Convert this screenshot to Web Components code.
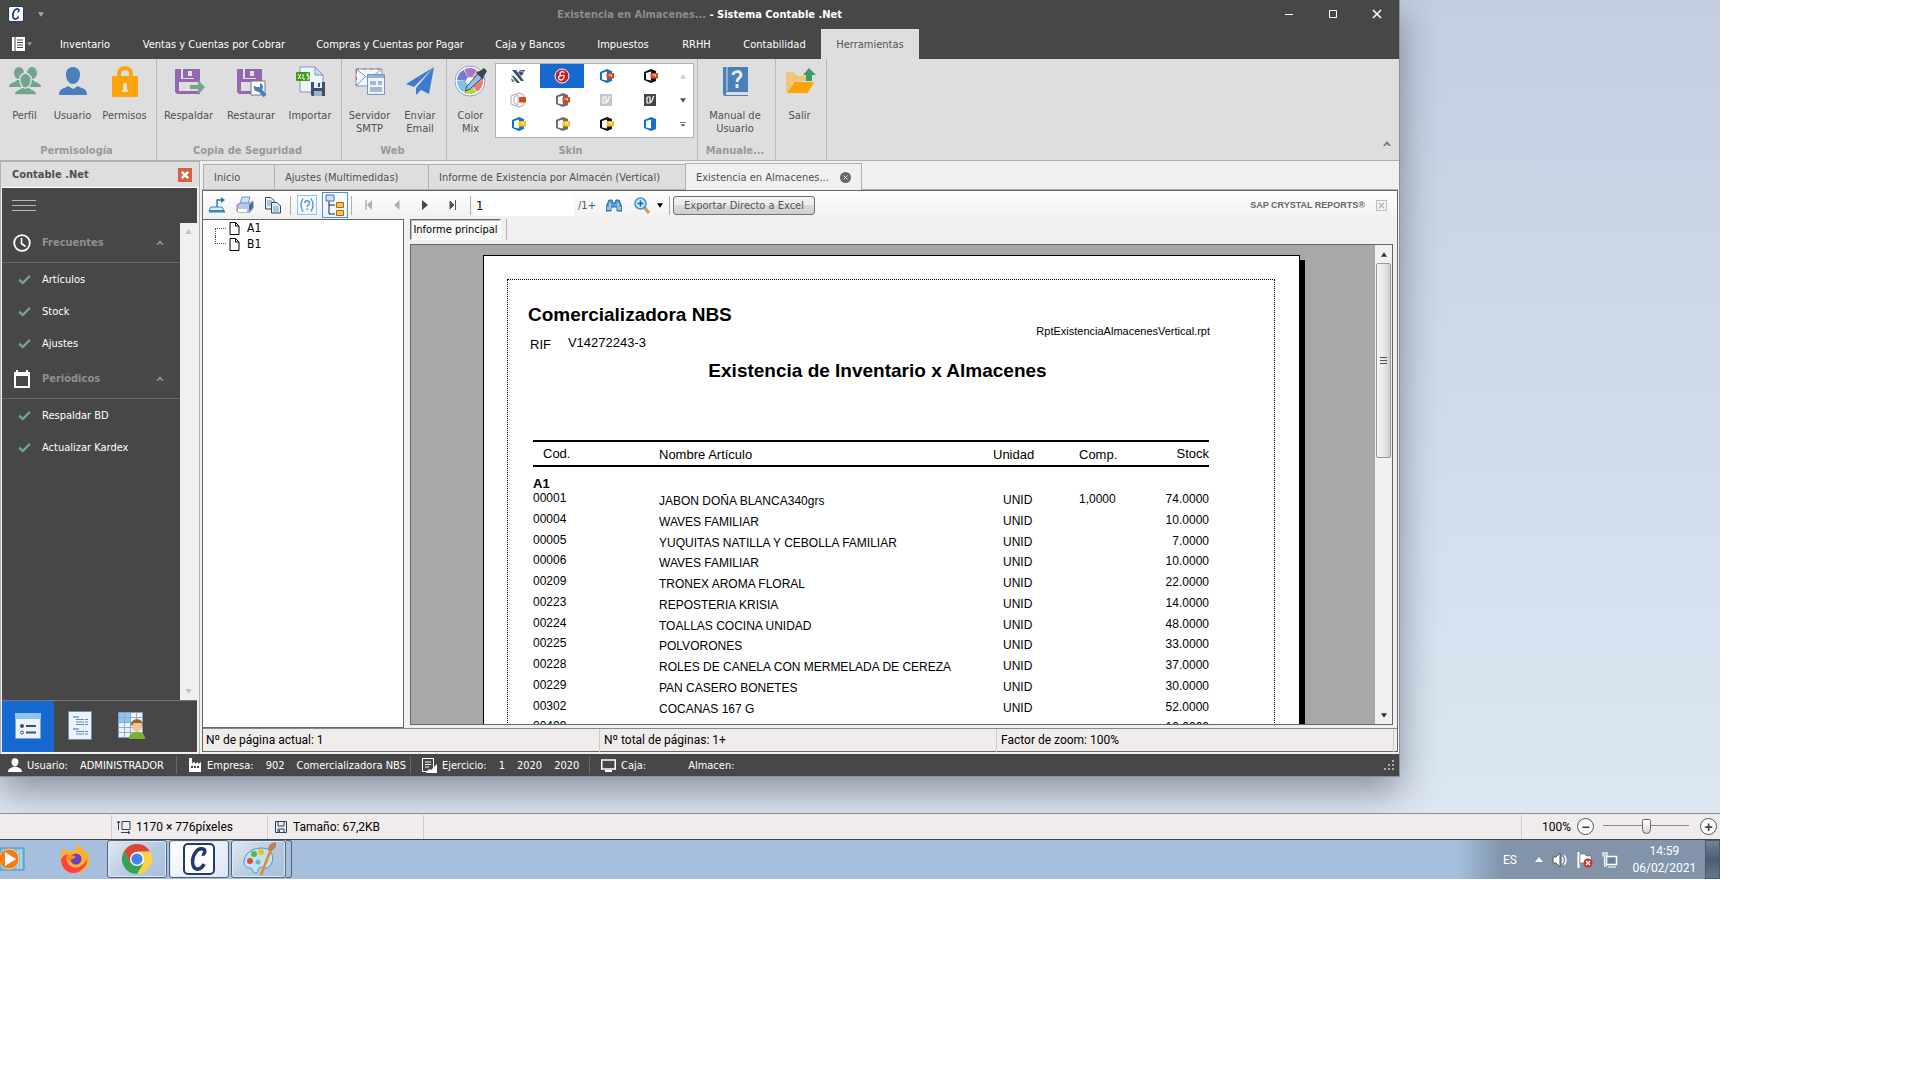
<!DOCTYPE html>
<html lang="es">
<head>
<meta charset="utf-8">
<title>Sistema Contable .Net</title>
<style>
body{margin:0;background:#fff;font:11px/13px "DejaVu Sans Condensed",Roboto,sans-serif;color:#444}
</style>
</head>
<body>
<desk-top></desk-top>
<script>
const reset = `*{box-sizing:border-box}button{font:inherit;color:inherit;background:none;border:0;padding:0;margin:0;cursor:pointer}:host{display:block}`;
function define(name, css, html) {
  customElements.define(name, class extends HTMLElement {
    constructor() {
      super();
      this.attachShadow({mode: 'open'});
    }
    connectedCallback() {
      if (this.shadowRoot.childNodes.length) return;
      const t = document.createElement('template');
      t.innerHTML = `<style>${reset}${css}</style>` + (typeof html === 'function' ? html(this) : html);
      this.shadowRoot.append(t.content.cloneNode(true));
    }
  });
}

const office = (c, b) => `<path d="M2 4 9 1l5 2v10l-5 2-7-3z" fill="${c}"/><path d="M4 5l5-1.500v9L4 11.500z" fill="#fff"/>` + (b ? `<path d="M8.500 5H16v5.500H8.500z" fill="${b}"/><path d="M10.500 6.500h3.500v2h-1v-1h-2.500z" fill="#fff" opacity=".8"/>` : '');
const floppy = `<path d="M2 4h25v25H4l-2-2z" fill="#9468b1"/><path d="M8 4h13v10H8z" fill="#dedede"/><path d="M10 4h11v9H10z" fill="#9468b1"/><path d="M15 6h4v5h-4z" fill="#dedede"/><path d="M6 17h21v9H6z" fill="#dedede"/>`;
const icons = {
  users: ['0 0 32 28', `<g fill="#73a48f"><ellipse cx="10" cy="6" rx="5" ry="6"/><ellipse cx="23" cy="6" rx="5" ry="6"/><path d="M0 20c0-5 6-4 8-7h5v7zM32 20c0-5-6-4-8-7h-5v7z"/></g><g fill="#73a48f" stroke="#dedede" stroke-width="1.500"><path d="M5 28c0-6 6-5 8-8h7c2 3 8 2 8 8z"/><path d="M11 10q5-8 11 0c1 6-2 11-5.500 11S10 16 11 10z"/></g>`],
  user: ['0 0 28 28', `<path d="M7 7c0-4 3-7 7-7s7 3 7 7c0 6-3 10-7 10S7 13 7 7zM0 28c0-7 5-6 9-9l5 3 5-3c4 3 9 2 9 9z" fill="#4a80b9"/>`],
  lock: ['0 0 26 32', `<path d="M7 13V9a6 6 0 0 1 12 0v4" fill="none" stroke="#fca50b" stroke-width="4"/><rect y="11" width="26" height="21" rx="1" fill="#fca50b"/><circle cx="13" cy="20" r="2" fill="#dedede"/><path d="M11 20h4v5h1v2h-6v-2h1z" fill="#dedede"/>`],
  backup: ['0 0 32 32', floppy + `<path d="M17 20h8v-5l7 7-7 8v-6h-8z" fill="#73a48f"/>`],
  restore: ['0 0 32 32', floppy + `<path d="M16 16h14v14H16z" fill="#fff" stroke="#777"/><path d="M19 21a4.500 4.500 0 1 0 6-3v4h-3z" fill="#4a80b9"/><path d="m24 24 6 7" stroke="#4a80b9" stroke-width="4"/>`],
  xls: ['0 0 32 32', `<path d="M6 2h15l8 8v17H6z" fill="#eef4fc" stroke="#7d96bd"/><path d="M21 2v8h8z" fill="#cfdcf0" stroke="#7d96bd"/><rect x="2" y="7" width="14" height="9" rx="1" fill="#3f9a1b"/><path d="m4 9 3 5m0-5-3 5m5-5v5h2m4-5h-2v2h2v3h-2" stroke="#fff" stroke-width="1" fill="none"/><path d="M17 17h14v14H18l-1-1z" fill="#3c4f70"/><path d="M20 17h8v6h-8z" fill="#e4edf8"/><path d="M24 18h2v4h-2z" fill="#3c4f70"/><path d="M20 26h8v5h-8z" fill="#9fb3d1"/>`],
  smtp: ['0 0 32 32', `<path d="M2 4h26v17H2z" fill="#f3f7fd" stroke="#8397bd"/><path d="M2 4h26" stroke="#d55" stroke-dasharray="3 4"/><path d="M2.500 5v16" stroke="#d55" stroke-dasharray="3 4"/><path d="m2 4 13 10L28 4M2 21l9-9" fill="none" stroke="#8397bd"/><path d="M13.500 9.500h17v20h-17z" fill="#edf3fb" stroke="#7e92bb"/><path d="M14 10h16v3H14z" fill="#9aaed5"/><path d="M16 16h6v4h-6zM24 16h4v4h-4zM16 22h12v5H16z" fill="#a4b7da"/>`],
  plane: ['0 0 28 28', `<path d="M28 0 0 17l8 3zM28 0 10 21v7l5-5 8 4z" fill="#3f7bcc"/>`],
  mix: ['0 0 32 32', `<circle cx="15" cy="16" r="15" fill="#fff" stroke="#8b9dc4"/><g fill="none" stroke-width="9" stroke-dasharray="8.500 47"><circle cx="15" cy="16" r="8.500" stroke="#ee7a7a"/><circle cx="15" cy="16" r="8.500" stroke="#b6d04a" stroke-dashoffset="-9"/><circle cx="15" cy="16" r="8.500" stroke="#7ec0e8" stroke-dashoffset="-18"/><circle cx="15" cy="16" r="8.500" stroke="#6f7fd4" stroke-dashoffset="-27"/><circle cx="15" cy="16" r="8.500" stroke="#a678cc" stroke-dashoffset="-36"/><circle cx="15" cy="16" r="8.500" stroke="#f29a6c" stroke-dashoffset="-45"/></g><path d="M10 26 12 21 23 9l4 4-12 11z" fill="#8ec4ea" stroke="#2f4a6c"/><path d="m21 7 4-1 4-3 3 3-3 5-1 4z" fill="#35465c"/>`],
  book: ['0 0 26 32', `<path d="M1 2h25v25H4v3h22v1H3q-2 0-2-3z" fill="#4a80b9"/><path d="M5 2v24" stroke="#dedede"/><path d="M11 10c0-4 8-5 8 0 0 3-4 3-4 7" fill="none" stroke="#e8e8e8" stroke-width="3"/><path d="M13.500 19h3v4h-3z" fill="#e8e8e8"/>`],
  exit: ['0 0 32 32', `<path d="M2 7h8l3 4h9v5L9 17 4 27H2z" fill="#eec579"/><path d="M10 17h20l-6 11H3z" fill="#fca50b"/><path d="M25 3l7 7h-4v6h-6v-6h-3z" fill="#3d9b69"/>`],
  s0: ['0 0 16 16', `<path d="M1 7 5 9l5 6H7zM2 2h4l8 11h-3zM9 2h6l-1 2zM8 4l3 4 3-3-4-2z" fill="#384f6e"/><path d="m1 10 4 3-3 1z" fill="#478267"/>`],
  s1: ['0 0 16 16', `<circle cx="8" cy="8" r="7" fill="#cf1b1f" stroke="#fff"/><path d="M10.500 4.500C7 2 4.500 6 7 7.500c-3 0-3.500 4.500 0 4.500 3 0 3.500-4 3-4.500H8.500" fill="none" stroke="#fff" stroke-width="1.300"/>`],
  s2: ['0 0 16 16', office('#0f74c8', '#dc4a14')], s3: ['0 0 16 16', office('#111', '#dc4a14')],
  s4: ['0 0 16 16', `<path d="M1 4 9 1l5 2v10l-5 2-8-3zM4 5l4-2v10l-4-2z" fill="#fff" stroke="#aaa"/><path d="M9 5h7v5.500H9z" fill="#dc4a14"/>`],
  s5: ['0 0 16 16', office('#6a6a6a', '#dc4a14')],
  s6: ['0 0 16 16', `<path d="M2 2h12v12H2z" fill="#c4c6ce"/><path d="M5 5v6h3c3-1 2-5 4-7M5 5h3v5" fill="none" stroke="#fff" stroke-width="1.200"/>`],
  s7: ['0 0 16 16', `<path d="M2 2h12v12H2z" fill="#444"/><path d="M5 5v6h3c3-1 2-5 4-7M5 5h3v5" fill="none" stroke="#fff" stroke-width="1.200"/>`],
  s8: ['0 0 16 16', office('#0f74c8', '#fbbf12')], s9: ['0 0 16 16', office('#6a6a6a', '#fbbf12')],
  s10: ['0 0 16 16', office('#111', '#fbbf12')], s11: ['0 0 16 16', office('#0f74c8')],
  up: ['0 0 8 6', `<path d="M4 0 8 6H0z" fill="currentColor"/>`],
  down: ['0 0 8 6', `<path d="M0 0h8L4 6z" fill="currentColor"/>`],
  more: ['0 0 8 6', `<path d="M0 0h8v1H0zM1 2.500h6L4 6z" fill="currentColor"/>`],
  chevron: ['0 0 8 6', `<path d="M0 5 4 0l4 5H6L4 3 2 5z" fill="currentColor"/>`],
  file: ['0 0 13 14', `<path d="M0 0h13v14H0z" fill="#fff"/><path d="M3 0v14" stroke="#474747" stroke-width="1"/><path d="M5 3h6M5 5.500h6M5 8h6M5 10.500h6" stroke="#474747"/>`],
  logo: ['0 0 32 32', `<rect x="1" y="1" width="30" height="30" rx="4" fill="#fff" stroke="#223a70" stroke-width="2"/><path d="M19 11c3 1 4-4 1-5C14 4 8 14 10 22c2 7 9 4 11-1" fill="none" stroke="#223a70" stroke-width="3.500"/>`],
  min: ['0 0 10 10', `<path d="M1 5.500h8" stroke="#fff"/>`], max: ['0 0 10 10', `<path d="M1.500 1.500h7v7h-7z" stroke="#fff" fill="none"/>`],
  close: ['0 0 10 10', `<path d="m1 1 8 8M9 1 1 9" stroke="currentColor" stroke-width="1.600"/>`],
  closeb: ['0 0 10 10', `<path d="m1 1 8 8M9 1 1 9" stroke="currentColor" stroke-width="3"/>`],
  clock: ['0 0 18 18', `<circle cx="9" cy="9" r="7.800" fill="none" stroke="#fff" stroke-width="1.800"/><path d="M8.500 4v5.500l4 3" stroke="#fff" stroke-width="1.600" fill="none"/>`],
  cal: ['0 0 18 18', `<path d="M1 2h16v16H1z" fill="#fff"/><path d="M3 0h2v3H3zM13 0h2v3h-2z" fill="#fff"/><path d="M3 6h12v10H3z" fill="#474747"/>`],
  check: ['0 0 14 10', `<path d="m1 5 4 4 8-8" fill="none" stroke="#73a48f" stroke-width="2.500"/>`],
  burger: ['0 0 24 12', `<path d="M0 1.500h24M0 6.500h24M0 11.500h24" stroke="#b5b5b5"/>`],
  nav1: ['0 0 28 28', `<path d="M1.500 1.500h25v25h-25z" fill="#eef2fa" stroke="#7fa6d6"/><path d="M1 1h26v6H1z" fill="#8fc2e8"/><circle cx="8" cy="14" r="2" fill="#414f6f"/><circle cx="8" cy="20.500" r="1.500" fill="none" stroke="#414f6f"/><path d="M12 14h10M12 20.500h10" stroke="#414f6f" stroke-width="2"/>`],
  nav2: ['0 0 28 30', `<path d="M2.500.5h23v28h-23z" fill="#edf3fb" stroke="#6f8cbd"/><path d="M7 6h6M7 18h6" stroke="#3a67b0"/><path d="M10 8.500h8M10 11h8M10 13.500h8M10 20.500h8M10 23h8M19 8.500h3M19 11h3M19 13.500h3M19 20.500h3M19 23h3" stroke="#5d87c6"/>`],
  nav3: ['0 0 28 28', `<path d="M.5.500h24v25H.5z" fill="#edf3fb" stroke="#7ca0cc"/><path d="M1 1h11v9H1z" fill="#8fc2ec"/><path d="M6.500 1v24M12.500 1v24M18.500 1v24M1 5.500h23M1 10.500h23M1 15.500h23M1 20.500h23" stroke="#8eabd4"/><ellipse cx="19" cy="14" rx="5" ry="6" fill="#f3c695"/><path d="M13 14c-1-9 13-9 12 0l-2-3h-7z" fill="#9a6330"/><path d="M11 27c0-7 5-6 8-7 3 1 8 0 8 7z" fill="#7ab22c"/>`],
  stuser: ['0 0 14 14', `<path d="M3.500 3.500c0-4.500 7-4.500 7 0 0 3-1.500 5-3.500 5s-3.500-2-3.500-5zM0 14c0-4 3-4 5-5h4c2 1 5 1 5 5z" fill="#fff"/>`],
  factory: ['0 0 14 14', `<path d="M1 14V0h3v5l3-1v2l3-2v2l3-2v10z" fill="#fff"/><path d="M3 8h2v2H3zM6 8h2v2H6zM9 8h2v2H9z" fill="#474747"/>`],
  doc: ['0 0 15 15', `<path d="M.5.500h11v13H.5z" fill="none" stroke="#fff"/><path d="M3 4h6M3 6.500h6M3 9h4" stroke="#fff"/><path d="m4 15 3-4 2 1 6-6v9z" fill="#fff"/>`],
  screen: ['0 0 15 13', `<path d="M.75 1h13.500v9H.75z" fill="none" stroke="#fff" stroke-width="1.500"/><path d="M4 11h7v2H4z" fill="#fff"/>`],
  grip: ['0 0 11 11', `<path d="M8 0h2v2H8zM4 4h2v2H4zM8 4h2v2H8zM0 8h2v2H0zM4 8h2v2H4zM8 8h2v2H8z" fill="#aaa"/>`],
  export: ['0 0 18 18', `<path d="M3 11h11l2 3.500H1z" fill="#d8ecf8" stroke="#3089bd"/><path d="M1 15.500h16" stroke="#3089bd" stroke-width="2"/><path d="M9 11V4h6" stroke="#27749d" fill="none" stroke-width="1.300"/><path d="m13 1 4 3-4 3z" fill="#27749d"/>`],
  print: ['0 0 18 18', `<path d="M6 1h8l-2 7H4z" fill="#cfe2fa" stroke="#7595be"/><path d="M1 9l3-2h10l3-2v7l-3 4H2l-1-1z" fill="#b6c8de" stroke="#6a8ab5"/><path d="M13 9l4-3v6l-4 3z" fill="#3b6ea9"/><path d="M2 13h9v3H2z" fill="#fff"/>`],
  copy: ['0 0 18 18', `<path d="M1.500 1.500H7l3 3V13H1.500z" fill="#eaf2fa" stroke="#3c4652"/><path d="M3 5h5M3 7h5M3 9h5" stroke="#5ea0d0"/><path d="M7.500 6.500H13l3.500 3.500v7h-9z" fill="#eaf2fa" stroke="#3c4652"/><path d="M9 11h6M9 13h6M9 15h6" stroke="#5ea0d0"/>`],
  help: ['0 0 16 16', `<path d="M4 1.500q-4 6.500 0 13M12 1.500q4 6.500 0 13M5.700 6c0-3 4.800-3 4.800 0 0 2-2.300 1.800-2.300 4" fill="none" stroke="#3c97ee" stroke-width="1.300"/><path d="M7.500 11.500H9V13H7.500z" fill="#3c97ee"/>`],
  tree: ['0 0 22 22', `<path d="M5 7v13h6M5 11h6" fill="none" stroke="#0c2d5e"/><path d="M2 1h8v6H2z" fill="#cfe0fb" stroke="#5070a8"/><path d="M12.500 8.500h7v5h-7zM12.500 16.500h7v5h-7z" fill="#f9c24d" stroke="#a66a12"/>`],
  first: ['0 0 8 10', `<path d="M1 0v10" stroke="#b0b0b0" stroke-width="1.500"/><path d="M7 0 2 5l5 5z" fill="#b0b0b0"/>`],
  prev: ['0 0 6 10', `<path d="M5.500 0v10L0 5z" fill="#b0b0b0"/>`], next: ['0 0 6 10', `<path d="M0 0v10l6-5z" fill="#484848"/>`],
  last: ['0 0 8 10', `<path d="M1 1v8l4-4zM6.500 0v10" fill="#555" stroke="#555"/>`],
  find: ['0 0 16 14', `<path d="M3 2h3l1 3h2l1-3h3l3 7v4h-5V9H5v4H0V9z" fill="#5a9cd0" stroke="#1f6ba5"/><path d="M2 9v3M4 5v7M12 5v7M14 9v3" stroke="#d5e9f8"/>`],
  zoom: ['0 0 17 17', `<path d="m10 10 5 6" stroke="#d49b53" stroke-width="3"/><circle cx="6.500" cy="6.500" r="5.500" fill="#c9e4fb" stroke="#3f93d8" stroke-width="1.500"/><path d="M3.500 6.500h6M6.500 3.500v6" stroke="#1767b3" stroke-width="1.500"/>`],
  page: ['0 0 11 13', `<path d="M1 .5h5.500L10 4v8.500H1z" fill="#fff" stroke="#000"/><path d="M6.500.500V4H10" fill="none" stroke="#000"/>`],
  size: ['0 0 14 14', `<path d="M5 1.500h8v8H5zM1.500 1v9M0 3l1.500-2L3 3M4 12.500h9M11 11l2 1.500L11 14" fill="none" stroke="#2b4061"/>`],
  disk: ['0 0 12 12', `<path d="M.5.500h11v11H.5zM3 1v4h6V1M3 11V8h6v3M4.500 9v2" fill="none" stroke="#2b4061"/>`],
  wmp: ['0 0 28 28', `<path d="M0 3h24v22H0z" fill="#7cc0e2" stroke="#4a93bd"/><path d="M21 4v20M18 5v19" stroke="#d6effa"/><circle cx="9" cy="14" r="10" fill="#f47b16" stroke="#fbc99a"/><path d="M5 7v14l11-7z" fill="#fff"/>`],
  firefox: ['0 0 32 32', `<path d="M1 18C0 11 2 7 4 4l3 4h6c1-1 3-2 4-3l3-5c2 3 4 5 7 8 3 3 5 7 4 11-1 15-28 18-30-1z" fill="#ffb02a"/><path d="M1 17c1 12 12 17 20 12s8-10 8-14c-3 9-10 11-14 10S4 19 8 11q-5 1-7 6z" fill="#fb4145"/><circle cx="17" cy="16" r="6" fill="#6a3fc4"/><path d="M7 12c4-1 9 0 10 2-3 2-5 3-9 3z" fill="#ff8a1e"/>`],
  chrome: ['0 0 32 32', `<path d="M2.100 8A16 16 0 0 1 29.900 8L16 8.500 9 20z" fill="#dc4638"/><path d="M29.900 8A16 16 0 0 1 16 32l6.500-12L16 8z" fill="#fdd045"/><path d="M2.100 8A16 16 0 0 0 16 32l6.500-11-13-1z" fill="#34a352"/><circle cx="16" cy="16" r="7.500" fill="#fff"/><circle cx="16" cy="16" r="6" fill="#4283ee"/>`],
  paint: ['0 0 34 34', `<path d="M2 19C3 8 17 4 25 7c7 3 7 13 3 17-4 5-8-1-11 2-2 2 0 5-4 5-3 0-2-5-5-5s-7-2-6-7z" fill="#bfe3f5" stroke="#5596bd"/><circle cx="8" cy="19" r="3" fill="#e04b3a"/><circle cx="12" cy="12" r="3" fill="#5ab946"/><circle cx="19" cy="10" r="3" fill="#f5bd20"/><circle cx="16" cy="20" r="2.500" fill="#79add0"/><path d="M29 7 19 33" stroke="#e38a2c" stroke-width="2.500"/><path d="M26 7q1-6 8-7 1 7-5 9z" fill="#b98252"/>`],
  tray: ['0 0 8 6', `<path d="M4 0 8 5H0z" fill="#fff"/>`],
  sound: ['0 0 16 16', `<path d="M1 5h3l4-4v14l-4-4H1z" fill="#fff" stroke="#555"/><path d="M10 5q2 3 0 6M12 3q4 5 0 10" fill="none" stroke="#fff" stroke-width="1.300"/>`],
  flag: ['0 0 16 16', `<path d="M1.500 0v16" stroke="#fff" stroke-width="2"/><path d="M3 2h5l1 2h5v7H3z" fill="#fff" stroke="#555" stroke-width=".5"/><circle cx="11" cy="11" r="4.500" fill="#d32f24"/><path d="m9 9 4 4m0-4-4 4" stroke="#fff" stroke-width="1.500"/>`],
  net: ['0 0 16 16', `<path d="M4.500 4.500h10v8h-10z" fill="#6f8196" stroke="#fff" stroke-width="1.500"/><path d="M6 15h8M2.500 5v9H5M1 0v4h4V0M3 0v3" stroke="#fff" fill="none" stroke-width="1.200"/>`]
};
define('ui-icon', `:host{display:inline-flex;flex:none}svg{display:block}`, el => {
  const [vb, body] = icons[el.getAttribute('name')];
  const [, , w, h] = vb.split(' ');
  const s = el.getAttribute('size');
  return `<svg viewBox="${vb}" width="${s || w}" height="${s ? Math.round(s * h / w) : h}" aria-hidden="true">${body}</svg>`;
});

/* ---- title bar and menu ---- */
define('title-bar', `:host{display:grid;grid-template-columns:1fr auto 1fr;align-items:center;height:28px;font-weight:bold;color:#fff}
 .l{display:flex;align-items:center;gap:14px;padding-left:8px;color:#aaa}.r{display:flex;justify-content:flex-end}.r button{width:44px;display:flex;justify-content:center}span{color:#8c8c8c}`,
 `<div class="l"><ui-icon name="logo" size="16"></ui-icon><ui-icon name="down" size="6"></ui-icon></div><div><span>Existencia en Almacenes...</span> - Sistema Contable .Net</div>
 <div class="r"><button aria-label="Minimizar"><ui-icon name="min"></ui-icon></button><button aria-label="Maximizar"><ui-icon name="max"></ui-icon></button><button aria-label="Cerrar"><ui-icon name="close"></ui-icon></button></div>`);
define('menu-bar', `:host{display:flex;height:31px;padding-top:1px;color:#fff}
 button{width:var(--w);height:30px}.file{width:43px;display:flex;align-items:center;gap:2px;padding-left:12px;color:#999}.on{background:#dedede;color:#555}`,
 `<button class="file" aria-label="Archivo"><ui-icon name="file"></ui-icon><ui-icon name="down" size="5"></ui-icon></button>` +
 [['Inventario', 84], ['Ventas y Cuentas por Cobrar', 174], ['Compras y Cuentas por Pagar', 178], ['Caja y Bancos', 102], ['Impuestos', 84], ['RRHH', 63], ['Contabilidad', 93], ['Herramientas', 98]]
 .map(([t, w], i) => `<button style="--w:${w}px"${i == 7 ? ' class="on"' : ''}>${t}</button>`).join(''));

/* ---- ribbon ---- */
define('ribbon-group', `:host{display:flex;flex-direction:column;border-right:1px solid #b9b9b9;padding:4px 3px 0 0;height:101px}
 .c{display:flex;height:81px}.t{font-weight:bold;color:#999;text-align:center}`,
 el => `<div class="c"><slot></slot></div><div class="t">${el.getAttribute('label') || ''}</div>`);
define('ribbon-button', `:host{display:block}button{width:var(--w);height:80px;display:flex;flex-direction:column;align-items:center;justify-content:flex-start}
 .i{height:46px;display:flex;align-items:flex-start;padding-top:2px}.i.low{padding-top:4px}`,
 el => `<button><span class="i${/^(users|user|plane)$/.test(el.getAttribute('icon')) ? ' low' : ''}"><ui-icon name="${el.getAttribute('icon')}"></ui-icon></span><slot></slot></button>`);
define('skin-gallery', `:host{display:flex;width:199px;height:75px;border:1px solid #b0b0b0;background:#fff;margin-left:1px}
 .g{display:grid;grid-template-columns:repeat(4,44px);grid-auto-rows:24px}button{display:flex;align-items:center;justify-content:center}.on{background:#1769d2}
 .s{display:grid;grid-auto-rows:24px;flex:1}.s button{color:#555}.s button:first-child{color:#ccc}`,
 `<div class="g">${[...Array(12)].map((_, i) => `<button aria-label="Skin ${i + 1}"${i == 1 ? ' class="on"' : ''}><ui-icon name="s${i}"></ui-icon></button>`).join('')}</div>
 <div class="s"><button aria-label="Subir"><ui-icon name="up" size="6"></ui-icon></button><button aria-label="Bajar"><ui-icon name="down" size="6"></ui-icon></button><button aria-label="Más"><ui-icon name="more" size="6"></ui-icon></button></div>`);
const rb = (i, t, w) => `<ribbon-button icon="${i}" style="--w:${w}px">${t}</ribbon-button>`;
define('ribbon-bar', `:host{display:flex;background:#dedede;border-bottom:1px solid #b0b0b0;color:#505050}.x{margin:auto 8px 10px auto;color:#777}`,
 `<ribbon-group label="Permisología">${rb('users', 'Perfil', 49)}${rb('user', 'Usuario', 47)}${rb('lock', 'Permisos', 57)}</ribbon-group>
 <ribbon-group label="Copia de Seguridad">${rb('backup', 'Respaldar', 63)}${rb('restore', 'Restaurar', 62)}${rb('xls', 'Importar', 56)}</ribbon-group>
 <ribbon-group label="Web">${rb('smtp', 'Servidor<br>SMTP', 55)}${rb('plane', 'Enviar<br>Email', 46)}</ribbon-group>
 <ribbon-group label="Skin">${rb('mix', 'Color<br>Mix', 47)}<skin-gallery></skin-gallery></ribbon-group>
 <ribbon-group label="Manuale...">${rb('book', 'Manual de<br>Usuario', 74)}</ribbon-group>
 <ribbon-group>${rb('exit', 'Salir', 47)}</ribbon-group>
 <button class="x" aria-label="Contraer"><ui-icon name="chevron"></ui-icon></button>`);

/* ---- side panel ---- */
define('nav-group', `h3{margin:0;height:40px;display:flex;align-items:center;font-size:11px;color:#8f8f8f;border-bottom:1px solid #666;padding:0 16px 0 11px}
 h3 ui-icon{width:29px}h3 .c{width:8px;margin-left:auto}`,
 el => `<h3><ui-icon name="${el.getAttribute('icon')}"></ui-icon>${el.getAttribute('label')}<ui-icon class="c" name="chevron"></ui-icon></h3><slot></slot>`);
define('nav-item', `a{height:32px;display:flex;align-items:center;gap:11px;padding-left:16px;color:#fff;text-decoration:none}`,
 `<a href="#"><ui-icon name="check" size="13"></ui-icon><span><slot></slot></span></a>`);
define('side-panel', `:host{box-sizing:border-box;width:200px;display:flex;flex-direction:column;background:#f0f0f0;border-left:1px solid #b0b0b0;border-right:1px solid #b0b0b0;border-top:1px solid #b0b0b0;height:593px}
 header{height:26px;background:#dedede;display:flex;align-items:center;justify-content:space-between;padding:0 7px 0 11px;font-weight:bold;color:#505050;border-bottom:1px solid #fff}
 header button{width:14px;height:14px;background:#d9603f;color:#fff;display:flex;align-items:center;justify-content:center}
 .d{flex:1;margin:0 2px 2px 1px;background:#474747;display:flex;flex-direction:column}.b{height:35px;padding:11px 10px}
 .m{flex:1;display:flex}.m>div:first-child{flex:1}.s{width:17px;background:#f0f0f0;color:#c4c4c4;display:flex;flex-direction:column;justify-content:space-between;align-items:center;padding:6px 0}
 .n{display:flex;height:52px;border-top:1px solid #777}.n button{width:52px;height:51px;display:flex;justify-content:center;align-items:center;padding-bottom:2px}.n .on{background:#1769d2}`,
 `<header>Contable .Net<button aria-label="Cerrar panel"><ui-icon name="closeb" size="8"></ui-icon></button></header>
 <div class="d"><div class="b"><ui-icon name="burger"></ui-icon></div>
 <div class="m"><div><nav-group icon="clock" label="Frecuentes"><nav-item>Artículos</nav-item><nav-item>Stock</nav-item><nav-item>Ajustes</nav-item></nav-group>
 <nav-group icon="cal" label="Periódicos"><nav-item>Respaldar BD</nav-item><nav-item>Actualizar Kardex</nav-item></nav-group></div>
 <div class="s"><ui-icon name="up" size="7"></ui-icon><ui-icon name="down" size="7"></ui-icon></div></div>
 <div class="n"><button class="on" aria-label="Opciones"><ui-icon name="nav1"></ui-icon></button><button aria-label="Listado"><ui-icon name="nav2"></ui-icon></button><button aria-label="Usuarios"><ui-icon name="nav3"></ui-icon></button></div></div>`);

/* ---- documents ---- */
define('doc-tabs', `:host{display:flex;align-items:flex-end;height:29px;border-bottom:1px solid #b0b0b0;padding-left:1px}
 button{width:var(--w);height:25px;background:#dedede;border:1px solid #b0b0b0;border-bottom:0;border-right-width:0;text-align:left;padding:0 10px;color:#505050;display:flex;align-items:center;justify-content:space-between;white-space:nowrap}
 .on{height:27px;background:#f0f0f0;border-right-width:1px;margin-bottom:-1px}
 i{width:11px;height:11px;border-radius:50%;background:#666;color:#fff;display:flex;align-items:center;justify-content:center}`,
 [['Inicio', 71], ['Ajustes (Multimedidas)', 154], ['Informe de Existencia por Almacén (Vertical)', 257], ['Existencia en Almacenes...', 177]]
 .map(([t, w], i) => `<button style="--w:${w}px"${i == 3 ? ' class="on"' : ''}>${t}${i == 3 ? '<i><ui-icon name="close" size="5"></ui-icon></i>' : ''}</button>`).join(''));
define('viewer-toolbar', `:host{display:flex;align-items:center;height:28px;background:linear-gradient(#fff,#f0f0f0);color:#555}
 button{width:28px;height:24px;display:flex;align-items:center;justify-content:center}
 i{width:1px;height:19px;background:#b0b0b0;margin:0 3px}.h{width:20px;height:20px;border:1px solid #8fc3f5;margin:0 5px 0 3px}.t{width:26px;height:26px;border:1px solid #3c97ee}
 input{width:100px;height:22px;border:0;background:#fff;font:13px "DejaVu Sans Condensed",sans-serif;padding:0 2px}span{width:26px;padding-left:4px}
 .d{width:8px;color:#000}.e{width:142px;height:19px;border:1px solid #707070;border-radius:3px;background:linear-gradient(#f2f2f2,#ebebeb 50%,#dadada 50%,#cfcfcf)}
 b{margin-left:auto;font:bold 9px "Liberation Sans",sans-serif;color:#666;margin-right:11px}.x{width:11px;height:11px;border:1px solid #bbb;color:#aaa;margin-right:10px}`,
 `<button aria-label="Exportar"><ui-icon name="export"></ui-icon></button><button aria-label="Imprimir"><ui-icon name="print"></ui-icon></button><button aria-label="Copiar"><ui-icon name="copy"></ui-icon></button><i></i>
 <button class="h" aria-label="Ayuda"><ui-icon name="help"></ui-icon></button><button class="t" aria-label="Árbol"><ui-icon name="tree"></ui-icon></button><i></i>
 <button aria-label="Primera"><ui-icon name="first"></ui-icon></button><button aria-label="Anterior"><ui-icon name="prev"></ui-icon></button><button aria-label="Siguiente"><ui-icon name="next"></ui-icon></button><button aria-label="Última"><ui-icon name="last"></ui-icon></button><i></i>
 <input value="1" aria-label="Página"><span>/1+</span><button aria-label="Buscar"><ui-icon name="find"></ui-icon></button><button aria-label="Zoom"><ui-icon name="zoom"></ui-icon></button><button class="d" aria-label="Nivel de zoom"><ui-icon name="down" size="6"></ui-icon></button><i style="margin-left:5px"></i>
 <button class="e">Exportar Directo a Excel</button><b>SAP CRYSTAL REPORTS®</b><button class="x" aria-label="Cerrar vista"><ui-icon name="close" size="7"></ui-icon></button>`);
define('group-tree', `:host{box-sizing:border-box;width:201px;background:#fff;border:1px solid #666;border-left:0;padding:0 0 0 12px;font-size:12px;color:#000}
 div{display:flex;align-items:center;height:16px;gap:7px}i{width:11px;height:8px;border-top:1px dotted #555;align-self:flex-end}
 .a i{border-left:1px dotted #555}.b i{border-left:1px dotted #555;border-top:0;border-bottom:1px dotted #555;align-self:flex-start}ui-icon{margin-left:-4px}`,
 `<div class="a"><i></i><ui-icon name="page"></ui-icon>A1</div><div class="b"><i></i><ui-icon name="page"></ui-icon>B1</div>`);

const rows = [['00001', 'JABON DOÑA BLANCA340grs', 'UNID', '1,0000', '74.0000'], ['00004', 'WAVES FAMILIAR', 'UNID', '', '10.0000'], ['00005', 'YUQUITAS NATILLA Y CEBOLLA FAMILIAR', 'UNID', '', '7.0000'], ['00006', 'WAVES FAMILIAR', 'UNID', '', '10.0000'], ['00209', 'TRONEX AROMA FLORAL', 'UNID', '', '22.0000'], ['00223', 'REPOSTERIA KRISIA', 'UNID', '', '14.0000'], ['00224', 'TOALLAS COCINA UNIDAD', 'UNID', '', '48.0000'], ['00225', 'POLVORONES', 'UNID', '', '33.0000'], ['00228', 'ROLES DE CANELA CON MERMELADA DE CEREZA', 'UNID', '', '37.0000'], ['00229', 'PAN CASERO BONETES', 'UNID', '', '30.0000'], ['00302', 'COCANAS 167 G', 'UNID', '', '52.0000'], ['00409', '', '', '', '10.0000']];
define('report-page', `:host{box-sizing:border-box;width:817px;height:900px;background:#fff;border:1px solid #000;padding:23px 24px 0 23px;font:12px/14px "Liberation Sans",Arial,sans-serif;color:#000;box-shadow:5px 5px 0 #000}
 .p{border:1px dotted #000;height:860px;padding:0 64px 0 25px}
 h1,h2{margin:0;font-size:19px;line-height:22px}.co{margin-left:-5px;display:flex;flex-direction:column;gap:9px}.co p{margin:0 0 0 2px;font-size:13px;line-height:15px;display:flex;gap:17px}.co p span:first-child{padding-top:2px}
 h2{text-align:center;margin-top:5px;padding-left:12px}
 .top{display:flex;justify-content:space-between;height:75px;padding-top:24px;align-items:flex-start}.f{font-size:11px;line-height:13px;padding-top:21px}
 table{border-collapse:collapse;width:676px;table-layout:fixed;margin-top:58px}td,th{padding:0;vertical-align:top;text-align:left;font-weight:normal;white-space:nowrap}
 th{font-size:13px;height:25px;line-height:15px;padding:4px 0 0;border-top:2px solid #000;border-bottom:2px solid #000}th:first-child{padding-left:10px}
 th:nth-child(n+2){padding-top:5px}th:last-child,td:last-child{text-align:right}th:last-child{padding-top:4px}
 .g td{font-weight:bold;font-size:13px;line-height:15px;height:25px;padding-top:9px;text-align:left}
 .r td{height:21px}.r:nth-child(4n) td{height:20px}.r td:nth-child(2){padding-top:3px}.r td:nth-child(3){padding:2px 0 0 10px}.r td:nth-child(n+4){padding-top:1px}`,
 `<div class="p"><div class="top"><div class="co"><h1>Comercializadora NBS</h1><p><span>RIF</span><span>V14272243-3</span></p></div><div class="f">RptExistenciaAlmacenesVertical.rpt</div></div>
 <h2>Existencia de Inventario x Almacenes</h2>
 <table><colgroup><col style="width:126px"><col style="width:334px"><col style="width:86px"><col style="width:60px"><col></colgroup><thead><tr><th>Cod.</th><th>Nombre Artículo</th><th>Unidad</th><th>Comp.</th><th>Stock</th></tr></thead>
 <tbody><tr class="g"><td colspan="5">A1</td></tr>${rows.map(r => `<tr class="r">${r.map(c => `<td>${c}</td>`).join('')}</tr>`).join('')}</tbody></table></div>`);
define('scroll-bar', `:host{box-sizing:border-box;width:17px;background:#f0f0f0;display:flex;flex-direction:column;align-items:center;padding:7px 1px 6px;color:#333}
 div{width:15px;height:195px;border:1px solid #979797;border-radius:2px;background:linear-gradient(90deg,#f5f5f5,#e9e9eb 50%,#cfcfd2);margin:6px 0 auto;display:flex;flex-direction:column;justify-content:center;align-items:center;gap:2px}i{width:7px;height:1px;background:#555}`,
 `<ui-icon name="up" size="6"></ui-icon><div><i></i><i></i><i></i></div><ui-icon name="down" size="6"></ui-icon>`);
define('report-view', `:host{flex:1;min-width:0;display:flex;flex-direction:column;padding:0 4px 3px 6px}
 .t{display:flex;height:25px;align-items:flex-start;gap:5px}.t button{color:#000;width:91px;height:21px;border:1px solid #fff;border-top-color:#666;border-left-color:#666;background:#f8f8f8;box-shadow:inset 1px 1px 0 #bbb;white-space:nowrap}.t i{width:1px;height:21px;background:#b0b0b0}
 .v{flex:1;min-height:0;border:1px solid #666;background:#a8a8a8;display:flex;justify-content:space-between}
 .c{flex:1;overflow:hidden;padding:10px 0 0 72px;height:479px}`,
 `<div class="t"><button>Informe principal</button><i></i></div><div class="v"><div class="c"><report-page></report-page></div><scroll-bar></scroll-bar></div>`);
define('viewer-status', `:host{display:grid;grid-template-columns:repeat(3,1fr);height:23px;background:#f0eceb;border-top:1px solid #888;color:#000;font:12px/23px Roboto,"Segoe UI",sans-serif;padding-right:3px}
 div{border-right:1px solid #ccc;padding-left:3px}div+div{padding-left:4px}`, `<div>Nº de página actual: 1</div><div>Nº total de páginas: 1+</div><div>Factor de zoom: 100%</div>`);
define('doc-area', `:host{flex:1;min-width:0;background:#f0f0f0;padding:0 1px 0 2px}
 .w{border:1px solid #666;height:562px;display:flex;flex-direction:column}.m{flex:1;min-height:0;display:flex}`,
 `<doc-tabs></doc-tabs><div class="w"><viewer-toolbar></viewer-toolbar><div class="m"><group-tree></group-tree><report-view></report-view></div><viewer-status></viewer-status></div>`);
define('app-status', `:host{display:flex;align-items:center;height:22px;color:#fff}
 div{display:flex;align-items:center;height:18px;width:var(--w);padding-left:var(--p,11px);border-right:1px solid #666;gap:12px;white-space:nowrap}ui-icon{margin-right:-7px}div:last-of-type{border:0;flex:1}.g{margin-right:4px}.a{margin-left:30px}`,
 `<div style="--w:177px;--p:8px"><ui-icon name="stuser"></ui-icon><span>Usuario:</span><span>ADMINISTRADOR</span></div>
 <div style="--w:234px"><ui-icon name="factory"></ui-icon><span>Empresa:</span><span>902</span><span>Comercializadora NBS</span></div>
 <div style="--w:179px"><ui-icon name="doc"></ui-icon><span>Ejercicio:</span><span>1</span><span>2020</span><span>2020</span></div>
 <div><ui-icon name="screen"></ui-icon><span>Caja:</span><span class="a">Almacen:</span></div><ui-icon class="g" name="grip"></ui-icon>`);
define('app-window', `:host{margin-right:320px;background:#474747;border-right:1px solid #8a8f98;border-bottom:1px solid #8a8f98;box-shadow:0 14px 36px rgba(30,36,50,.45)}
 .m{display:flex;height:593px;background:#f0f0f0}`,
 `<title-bar></title-bar><menu-bar></menu-bar><ribbon-bar></ribbon-bar><div class="m"><side-panel></side-panel><doc-area></doc-area></div><app-status></app-status>`);

/* ---- desktop behind ---- */
define('paint-status', `:host{display:flex;align-items:center;height:27px;box-sizing:border-box;background:#f0eceb;border-top:1px solid #868b94;border-bottom:1px solid #3c4450;color:#000;font:12px/14px Roboto,"Segoe UI",sans-serif}
 div{display:flex;align-items:center;gap:5px;width:var(--w);height:24px;border-right:1px solid #d0cccc;padding-left:5px}.e{flex:1}.z{width:198px;border:0;padding:0 3px 0 20px;gap:6px;justify-content:flex-end}
 .z button{width:17px;height:17px;border:1px solid #555;border-radius:50%;background:#fafafa;font:bold 14px/14px "Liberation Sans",sans-serif;color:#444;flex:none}
 input{appearance:none;width:86px;height:18px;margin:0 5px 0 3px;background:linear-gradient(#888,#888) 0 7px/100% 1px no-repeat}
 input::-webkit-slider-thumb{appearance:none;width:9px;height:15px;border:1px solid #666;border-radius:2px 2px 5px 5px;background:linear-gradient(#fff,#d5d5d5)}`,
 `<div style="--w:112px"></div><div style="--w:156px"><ui-icon name="size"></ui-icon><span>1170 × 776píxeles</span></div><div style="--w:156px;gap:6px;padding-left:7px"><ui-icon name="disk"></ui-icon><span>Tamaño: 67,2KB</span></div><div class="e"></div>
 <div class="z"><label for="z">100%</label><button aria-label="Alejar">−</button><input id="z" type="range" aria-label="Zoom"><button aria-label="Acercar">+</button></div>`);
define('task-bar', `:host{display:flex;height:39px;background:#a5bfdc;color:#fff}
 button{display:flex;align-items:center;justify-content:center;height:38px}.w{width:28px;justify-content:flex-start}.f{width:79px;padding-left:14px}
 .o{width:60px;border:1px solid #53657b;border-radius:3px;background:linear-gradient(135deg,#dfe8f3,#b4c8e0 60%,#a9c0dc);margin-right:2px;box-shadow:inset 0 0 0 1px #dce7f3}.on{background:linear-gradient(135deg,#fff,#dde6f1)}
 .p{width:55px;margin-right:0}.k{width:6px;border:1px solid #53657b;border-left:0;height:38px;border-radius:0 3px 3px 0}
 .t{margin-left:auto;display:flex;align-items:center;width:263px;background:linear-gradient(90deg,#a5bfdc,#8294aa 45px);padding-left:46px}
 .t ui-icon{margin-left:9px}.c{width:84px;margin-left:5px;text-align:center;font:12px/17px Roboto,sans-serif}.t>span{width:24px;font:12px/14px Roboto,sans-serif}.s{width:15px;height:39px;border:1px solid #49586a;background:linear-gradient(#718296,#4c5d71 50%,#67788c);margin-left:auto}`,
 `<button class="w" aria-label="Reproductor"><ui-icon name="wmp"></ui-icon></button><button class="f" aria-label="Firefox"><ui-icon name="firefox" size="30"></ui-icon></button>
 <button class="o" aria-label="Chrome"><ui-icon name="chrome" size="30"></ui-icon></button><button class="o on" aria-label="Sistema Contable"><ui-icon name="logo"></ui-icon></button><button class="o p" aria-label="Paint"><ui-icon name="paint"></ui-icon></button><i class="k"></i>
 <div class="t"><span>ES</span><ui-icon name="tray"></ui-icon><ui-icon name="sound"></ui-icon><ui-icon name="flag"></ui-icon><ui-icon name="net"></ui-icon><div class="c">14:59<br>06/02/2021</div><button class="s" aria-label="Mostrar escritorio"></button></div>`);
define('desk-top', `:host{margin-right:200px}.b{height:813px;overflow:hidden;background:linear-gradient(#c3cee1,#dde7f3)}`,
 `<div class="b"><app-window></app-window></div><paint-status></paint-status><task-bar></task-bar>`);
</script>
</body>
</html>
